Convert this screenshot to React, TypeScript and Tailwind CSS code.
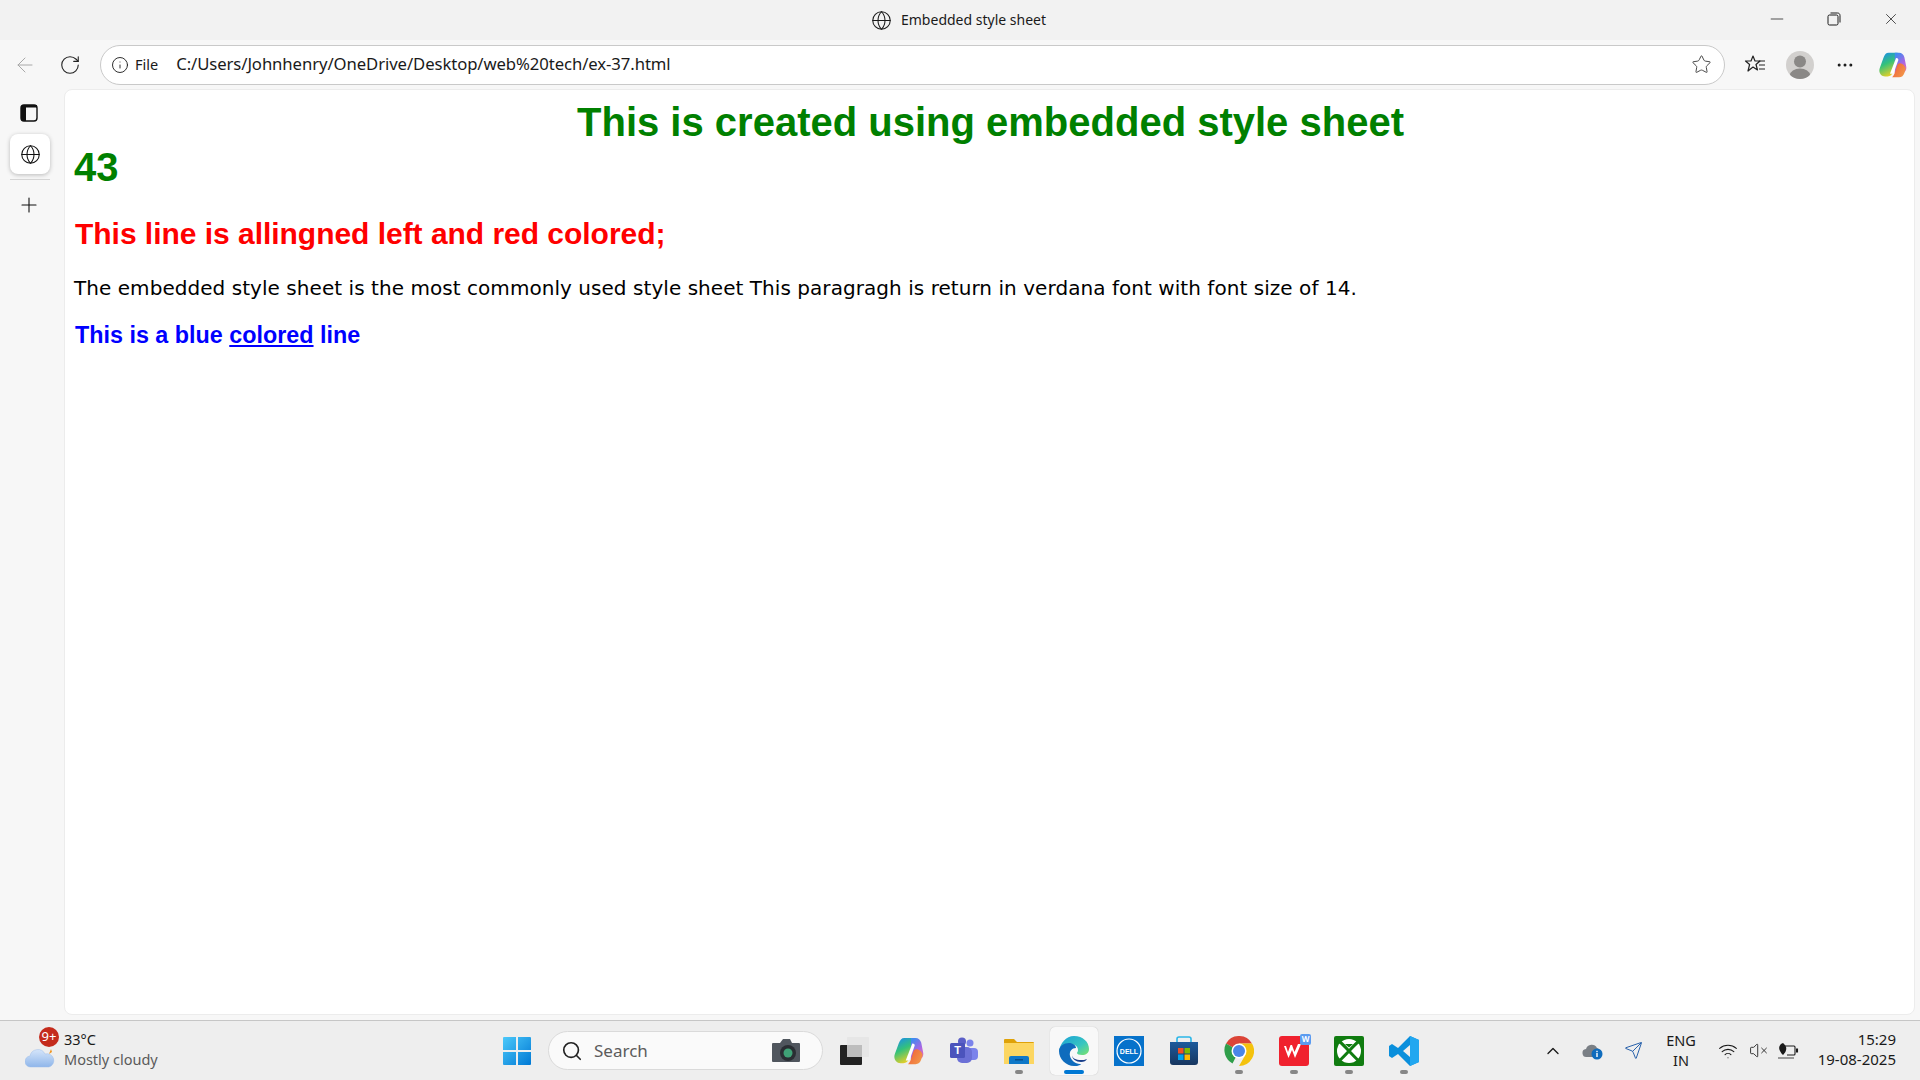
import React from "react";
import { ArrowLeft, RotateCw, Info, Star, Plus, Globe, X, Minus, ChevronUp, Search, Ellipsis, VolumeX, Wifi, Send } from "lucide-react";

const ui = { fontFamily: '"Noto Sans", "Open Sans", sans-serif' };

function CopilotLogo({ id, size }: { id: string; size: number }) {
  return (
    <svg width={size} height={size} viewBox="0 0 32 32">
      <defs>
        <linearGradient id={id + "a"} x1="0.2" y1="0" x2="0.6" y2="1">
          <stop offset="0" stopColor="#1b8fe8" />
          <stop offset="0.45" stopColor="#34c27a" />
          <stop offset="1" stopColor="#f5d020" />
        </linearGradient>
        <linearGradient id={id + "b"} x1="0.3" y1="0" x2="0.8" y2="1">
          <stop offset="0" stopColor="#3f8cf0" />
          <stop offset="0.55" stopColor="#a866e4" />
          <stop offset="1" stopColor="#e86fb0" />
        </linearGradient>
        <linearGradient id={id + "c"} x1="0" y1="0.2" x2="1" y2="0.8">
          <stop offset="0" stopColor="#f0603a" />
          <stop offset="1" stopColor="#f29a4a" />
        </linearGradient>
      </defs>
      <path d="M11 2h9c2 0 3 1 2.500 3L16 24c-1 3-3 5-6 5H7C2 29-1 24 1 19l4-11c1.500-4 3-6 6-6z" fill={`url(#${id}a)`} />
      <path d="M18 2h5c3 0 5 2 6 5l2 10c1 4-1 8-5 8h-8z" fill={`url(#${id}b)`} />
      <path d="M24 14c-2 0-3 1-3.500 3L18 25c-.7 2-2 4-3 5h8c3 0 5-2 6-5l1.500-5c-1-3.500-3.500-6-6.500-6z" fill={`url(#${id}c)`} />
      <path d="M19.500 8l-7 18h2.500c1 0 1.500-.5 2-1.500l5-14c.4-1.200-.2-2.500-2.500-2.500z" fill="#fff" />
    </svg>
  );
}

function TaskButton({ children, dot, active }: { children: React.ReactNode; dot?: boolean; active?: boolean }) {
  return (
    <div className={active ? "relative flex h-[48px] w-[48px] items-center justify-center rounded-[5px] bg-[#f8f8f8] shadow-[0_0_1px_rgba(0,0,0,0.25)]" : "relative flex h-[48px] w-[48px] items-center justify-center"}>
      {children}
      {dot && <span className="absolute bottom-[1px] left-[20px] h-[4px] w-[8px] rounded-full bg-[#868686]" />}
      {active && <span className="absolute bottom-[1px] left-[14px] h-[4px] w-[20px] rounded-full bg-[#0078d4]" />}
    </div>
  );
}

export default function App() {
  return (
    <div className="flex h-[1080px] w-[1920px] flex-col overflow-hidden bg-[#f7f7f7] text-[#1a1a1a]" style={ui}>
      {/* Title bar */}
      <div className="relative flex h-[40px] shrink-0 items-center justify-center bg-[#f2f2f2]">
        <div className="flex items-center gap-[9px] pr-[3px]">
          <Globe size={21} strokeWidth={1.2} />
          <span className="text-[14px] leading-none">Embedded style sheet</span>
        </div>
        <div className="absolute right-0 top-0 flex h-[38px] items-center">
          <div className="flex w-[57px] justify-center"><Minus size={20} strokeWidth={0.9} /></div>
          <div className="flex w-[57px] justify-center">
            <svg width="14" height="14" viewBox="0 0 14 14" fill="none" stroke="#1a1a1a" strokeWidth="1">
              <rect x="1" y="3" width="10" height="10" rx="1.500" />
              <path d="M3.500 1h7c1.500 0 2.500 1 2.500 2.500v7" />
            </svg>
          </div>
          <div className="flex w-[58px] justify-center"><X size={18} strokeWidth={1} /></div>
        </div>
      </div>

      {/* Toolbar */}
      <div className="flex h-[49px] shrink-0 items-center">
        <div className="flex w-[50px] justify-center"><ArrowLeft size={24} strokeWidth={1} color="#a8a8a8" /></div>
        <div className="flex w-[40px] justify-center"><RotateCw size={22} strokeWidth={1.2} color="#222" /></div>
        <div className="ml-[10px] flex h-[40px] w-[1625px] items-center rounded-full border border-[#c9c9c9] bg-white pr-[12px]">
          <Info size={18} strokeWidth={1.2} className="ml-[10px]" />
          <span className="ml-[6px] text-[14.5px] leading-none">File</span>
          <span className="ml-[18px] text-[16.7px] leading-none tracking-[-0.08px]">C:/Users/Johnhenry/OneDrive/Desktop/web%20tech/ex-37.html</span>
          <Star size={21} strokeWidth={1.1} color="#444" className="ml-auto" />
        </div>
        <div className="ml-[18px] flex w-[24px] justify-center">
          <svg width="22" height="22" viewBox="0 0 22 22" fill="none" stroke="#222" strokeWidth="1.200" strokeLinejoin="round">
            <path d="M9 2l2 5h5l-4 3.500 1.500 5.500L9 13l-5 4 1.600-6.500L1.500 7h5.500z" />
            <path d="M15 7h6M15 11h6M15 15h6" />
          </svg>
        </div>
        <div className="ml-[19px] flex h-[28px] w-[28px] items-end justify-center overflow-hidden rounded-full bg-[#d2d0ce]">
          <svg width="28" height="28" viewBox="0 0 28 28" fill="#8a8886">
            <circle cx="14" cy="10.500" r="6" />
            <ellipse cx="14" cy="24" rx="10" ry="6.500" />
          </svg>
        </div>
        <div className="ml-[19px] flex w-[24px] justify-center"><Ellipsis size={20} strokeWidth={1.6} /></div>
        <div className="ml-[22px] flex w-[28px] justify-center"><CopilotLogo id="top" size={28} /></div>
      </div>

      {/* Middle */}
      <div className="flex min-h-0 flex-1">
        <div className="flex w-[64px] shrink-0 flex-col items-center">
          <svg className="ml-[-6px] mt-[15px]" width="18" height="18" viewBox="0 0 18 18" fill="none">
            <rect x="1" y="1" width="16" height="16" rx="3" stroke="#111" strokeWidth="1.400" />
            <path d="M1 4a3 3 0 0 1 3-3h13v2.500H6V17H4a3 3 0 0 1-3-3z" fill="#111" />
          </svg>
          <div className="ml-[-4px] mt-[12px] flex h-[40px] w-[40px] items-center justify-center rounded-[8px] bg-white shadow-[0_1px_4px_rgba(0,0,0,0.25)]">
            <Globe size={21} strokeWidth={1.2} color="#111" />
          </div>
          <div className="ml-[-4px] mt-[5px] h-px w-[40px] bg-[#d5d5d5]" />
          <Plus size={24} strokeWidth={1.1} color="#111" className="ml-[-6px] mt-[13px]" />
        </div>
        <main className="mr-[5px] mb-[5px] flex-1 rounded-[8px] border border-[#ececec] bg-white pl-[10px] pr-[8px] pt-[10px] text-black">
          <h1 className="text-center text-[40px] font-bold leading-[45px] text-[#008000]" style={{ fontFamily: '"Liberation Sans", sans-serif' }}>This is created using embedded style sheet</h1>
          <h1 className="-ml-[1px] text-[40px] font-bold leading-[45px] text-[#008000]" style={{ fontFamily: '"Liberation Sans", sans-serif' }}>43</h1>
          <h2 className="mt-[26px] text-[30px] font-bold leading-[35px] tracking-[-0.03px] text-[#ff0000]" style={{ fontFamily: '"Liberation Sans", sans-serif' }}>This line is allingned left and red colored;</h2>
          <p className="-ml-[1px] mt-[25px] text-[20px] leading-[24px] tracking-[0.05px]" style={{ fontFamily: '"DejaVu Sans", sans-serif' }}>The embedded style sheet is the most commonly used style sheet This paragragh is return in verdana font with font size of 14.</p>
          <p className="mt-[21px] text-[23.33px] font-bold leading-[28px] text-[#0000ff]" style={{ fontFamily: '"Liberation Sans", sans-serif' }}>This is a blue <span className="underline">colored</span> line</p>
        </main>
      </div>

      {/* Taskbar */}
      <div className="flex h-[60px] shrink-0 items-center border-t border-[#c6c6c6] bg-[#eeeeee]">
        <div className="flex w-[493px] shrink-0 items-center pl-[25px]">
          <div className="relative h-[40px] w-[32px]">
            <svg className="absolute bottom-[2px] left-0" width="30" height="24" viewBox="0 0 30 24">
              <defs>
                <linearGradient id="cl" x1="0" y1="0" x2="0" y2="1">
                  <stop offset="0" stopColor="#d5e5fa" />
                  <stop offset="1" stopColor="#8fb6ea" />
                </linearGradient>
              </defs>
              <path d="M24 9l3-2-1-3z" fill="#f0941e" />
              <path d="M6 22a5.500 5.500 0 0 1-1-11 8 8 0 0 1 15-2 6.500 6.500 0 0 1 4 13z" fill="url(#cl)" stroke="#9cbde8" strokeWidth="0.500" />
            </svg>
            <span className="absolute left-[14px] top-[-4px] flex h-[20px] w-[20px] items-center justify-center rounded-full bg-[#c42b1c] text-[13px] leading-none text-white">9+</span>
          </div>
          <div className="-mt-[3px] ml-[7px] flex flex-col text-[14.5px] leading-[20px]">
            <span className="text-[#1a1a1a]">33°C</span>
            <span className="text-[#5a5a5a]">Mostly cloudy</span>
          </div>
        </div>

        <div className="flex items-center gap-[7px]">
          <TaskButton>
            <svg width="30" height="30" viewBox="0 0 30 30">
              <defs>
                <linearGradient id="win" x1="0" y1="0" x2="1" y2="1">
                  <stop offset="0" stopColor="#4cc9fa" />
                  <stop offset="1" stopColor="#0078d4" />
                </linearGradient>
              </defs>
              <path d="M1 2a1 1 0 0 1 1-1h12v13H1zM16 1h12a1 1 0 0 1 1 1v12H16zM1 16h13v13H2a1 1 0 0 1-1-1zM16 16h13v12a1 1 0 0 1-1 1H16z" fill="url(#win)" />
            </svg>
          </TaskButton>

          <div className="flex h-[39px] w-[275px] items-center rounded-full border border-[#dadada] bg-[#fafafa]">
            <Search size={22} strokeWidth={1.8} className="ml-[12px] text-[#222]" />
            <span className="ml-[11px] text-[17px] leading-none text-[#5c5c5c]">Search</span>
            <svg className="ml-auto mr-[21px]" width="30" height="26" viewBox="0 0 30 26">
              <path d="M2 5h7l3-4h7l2 4h7a1 1 0 0 1 1 1v17a1 1 0 0 1-1 1H2a1 1 0 0 1-1-1V6a1 1 0 0 1 1-1z" fill="#50565e" />
              <circle cx="17" cy="15" r="8" fill="#2a2e33" />
              <circle cx="17" cy="15" r="4.500" fill="#3fa176" />
            </svg>
          </div>

          <TaskButton>
            <svg width="30" height="30" viewBox="0 0 30 30">
              <rect x="8" y="1" width="22" height="20" rx="1" fill="#e3e3e3" opacity="0.8" />
              <rect x="1" y="9" width="22" height="20" rx="1" fill="#222" />
              <rect x="8" y="9" width="15" height="12" fill="#bdbdbd" />
            </svg>
          </TaskButton>
          <TaskButton><CopilotLogo id="bar" size={30} /></TaskButton>
          <TaskButton>
            <svg width="30" height="30" viewBox="0 0 30 30">
              <circle cx="21" cy="7" r="3.500" fill="#7b83eb" />
              <rect x="18" y="12" width="11" height="12" rx="4" fill="#7b83eb" />
              <circle cx="13" cy="5.500" r="4" fill="#5b5fc7" />
              <rect x="8" y="11" width="15" height="16" rx="5" fill="#6b70d6" />
              <rect x="1" y="7" width="15" height="15" rx="1.500" fill="#4b53bc" />
              <text x="8.500" y="18" textAnchor="middle" fontSize="11" fontWeight="700" fill="#fff" fontFamily="Liberation Sans">T</text>
            </svg>
          </TaskButton>
          <TaskButton dot>
            <svg width="30" height="28" viewBox="0 0 30 28">
              <path d="M0 3a1 1 0 0 1 1-1h9l3 3h16a1 1 0 0 1 1 1v6H0z" fill="#dfa208" />
              <rect y="6" width="30" height="21" fill="#fcd661" />
              <path d="M5 27v-6a2 2 0 0 1 2-2h16a2 2 0 0 1 2 2v6z" fill="#0f78c8" />
              <rect x="11" y="22" width="8" height="1.500" fill="#0a4f8a" />
            </svg>
          </TaskButton>
          <TaskButton active>
            <svg width="30" height="30" viewBox="0 0 30 30">
              <defs>
                <linearGradient id="e1" x1="0" y1="0" x2="1" y2="1">
                  <stop offset="0" stopColor="#1ba0d8" />
                  <stop offset="0.6" stopColor="#37c6c0" />
                  <stop offset="1" stopColor="#7ce36b" />
                </linearGradient>
              </defs>
              <path d="M15 0c9 0 15 6 15 13 0 4-3 6-7 6-3 0-5-1-5-2 0-.6 1-1 1-3 0-4-4-6-8-6-5 0-9 3-11 8C1 7 7 0 15 0z" fill="url(#e1)" />
              <path d="M0 15c0-5 5-8 10-8 4 0 7 2.500 7 5-4 0-7 3-6 8 1 4 5 8 10 8 1 0 1 .5 0 1-2 1-4 1-6 1C7 30 0 23 0 15z" fill="#0f6cbd" />
              <path d="M13 19c0 4 4 7 9 7 3 0 5-1 6-3-2 1-4 1-6 1-5 0-9-2-9-5z" fill="#1a3f8a" />
            </svg>
          </TaskButton>
          <TaskButton>
            <svg width="30" height="30" viewBox="0 0 30 30">
              <rect width="30" height="30" fill="#0672cb" />
              <circle cx="15" cy="15" r="12" fill="none" stroke="#fff" strokeWidth="1.200" />
              <text x="15" y="17.500" textAnchor="middle" fontSize="7" fontWeight="700" fill="#fff" fontFamily="Liberation Sans">DELL</text>
            </svg>
          </TaskButton>
          <TaskButton>
            <svg width="30" height="30" viewBox="0 0 30 30">
              <defs>
                <linearGradient id="st" x1="0" y1="0" x2="0" y2="1">
                  <stop offset="0" stopColor="#1c5a9c" />
                  <stop offset="1" stopColor="#17365f" />
                </linearGradient>
              </defs>
              <path d="M8 7V3a2 2 0 0 1 2-2h10a2 2 0 0 1 2 2v4" fill="none" stroke="#2bb6e8" strokeWidth="1.600" />
              <path d="M1 6h28v20a3 3 0 0 1-3 3H4a3 3 0 0 1-3-3z" fill="url(#st)" />
              <rect x="9" y="12" width="5.500" height="5.500" fill="#f25022" />
              <rect x="15.500" y="12" width="5.500" height="5.500" fill="#7fba00" />
              <rect x="9" y="18.500" width="5.500" height="5.500" fill="#00a4ef" />
              <rect x="15.500" y="18.500" width="5.500" height="5.500" fill="#ffb900" />
            </svg>
          </TaskButton>
          <TaskButton dot>
            <svg width="30" height="30" viewBox="0 0 30 30">
              <path d="M15 15L2 7.500A15 15 0 0 1 28 7.500H15z" fill="#db4437" />
              <path d="M15 15l-6.500 12.500A15 15 0 0 1 2 7.500z" fill="#2f9e4a" />
              <path d="M15 7.500h13A15 15 0 0 1 15 30l6.500-11.200z" fill="#f4c20d" />
              <circle cx="15" cy="15" r="7.500" fill="#fff" />
              <circle cx="15" cy="15" r="6" fill="#4a86e8" />
            </svg>
          </TaskButton>
          <TaskButton dot>
            <div className="relative h-[30px] w-[30px]">
              <svg width="30" height="30" viewBox="0 0 30 30">
                <rect width="30" height="30" rx="3" fill="#f0212e" />
                <path d="M5 10l4.500 12 3.500-8 3 8 6-14h-3l-3.500 8-2.500-7h-1.500l-2.500 7-2-6z" fill="#fff" />
              </svg>
              <span className="absolute right-[-2px] top-[-2px] flex h-[11px] w-[11px] items-center justify-center rounded-[2px] bg-[#5b9bf0] text-[8px] font-bold leading-none text-white">W</span>
            </div>
          </TaskButton>
          <TaskButton dot>
            <svg width="30" height="30" viewBox="0 0 30 30">
              <rect width="30" height="30" rx="2" fill="#107c10" />
              <circle cx="15" cy="15" r="12" fill="#fff" />
              <path d="M5.500 5.500C10 9 20 21 24.500 24.500M24.500 5.500C20 9 10 21 5.500 24.500" fill="none" stroke="#107c10" strokeWidth="3" />
              <path d="M15 11.500l-4-3.500h8z" fill="#107c10" />
            </svg>
          </TaskButton>
          <TaskButton dot>
            <svg width="30" height="30" viewBox="0 0 30 30">
              <path d="M21 0l9 4v22l-9 4-12-12-6 4-3-2v-10l3-2 6 4zM21 9l-7 6 7 6z" fill="#0a8fdc" />
              <path d="M21 0l9 4v22l-9 4z" fill="#22a7f0" />
            </svg>
          </TaskButton>
        </div>

        <div className="ml-[110px] flex w-[30px] justify-center"><ChevronUp size={20} strokeWidth={1.6} /></div>
        <div className="relative ml-[10px] flex w-[30px] justify-center">
          <svg width="22" height="18" viewBox="0 0 22 18">
            <path d="M5 15a4 4 0 0 1-1-8 6 6 0 0 1 11-1 4 4 0 0 1 3 5v4z" fill="#7a7f85" />
            <circle cx="15" cy="12" r="5.500" fill="#0f6cbd" />
            <rect x="14.300" y="11" width="1.400" height="4" fill="#fff" />
            <rect x="14.300" y="8.800" width="1.400" height="1.400" fill="#fff" />
          </svg>
        </div>
        <div className="ml-[10px] flex w-[30px] justify-center"><Send size={19} strokeWidth={1.2} color="#1e5aa8" /></div>
        <div className="-mt-[1px] ml-[13px] flex w-[40px] flex-col items-center text-[14.5px] leading-[20px]">
          <span>ENG</span>
          <span>IN</span>
        </div>
        <div className="ml-[12px] flex w-[30px] justify-center"><Wifi size={20} strokeWidth={1.3} /></div>
        <div className="flex w-[30px] justify-center"><VolumeX size={19} strokeWidth={1.1} /></div>
        <div className="flex w-[30px] justify-center">
          <svg width="22" height="18" viewBox="0 0 22 18" fill="none" stroke="#1a1a1a" strokeWidth="1.100">
            <path d="M7 4h10a1 1 0 0 1 1 1v7a1 1 0 0 1-1 1h-7" />
            <path d="M19 7h1.500v3H19" fill="#1a1a1a" />
            <path d="M1 16h16" strokeWidth="0.800" />
            <path d="M6 1C3 2 1 5 3 9c1 2 2 3 3 4 2-2 4-5 3-8-.5-2-2-3-3-4z" fill="#1a1a1a" stroke="none" />
          </svg>
        </div>
        <div className="-mt-[3px] ml-auto mr-[24px] flex flex-col items-end text-[15px] leading-[20px]">
          <span>15:29</span>
          <span>19-08-2025</span>
        </div>
      </div>
    </div>
  );
}
